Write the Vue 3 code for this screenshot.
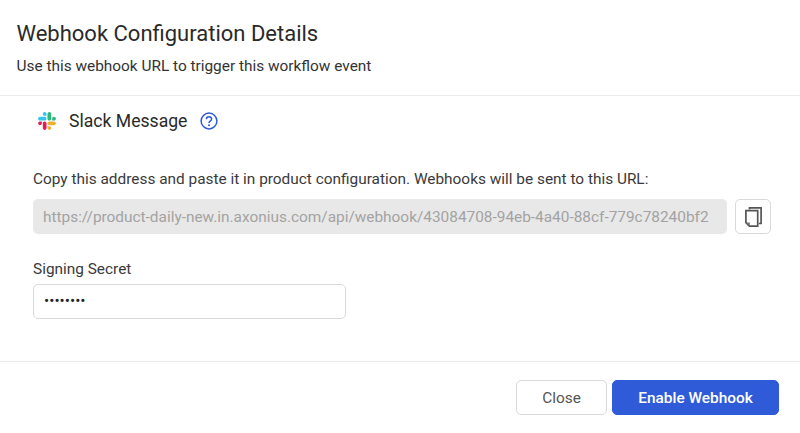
<script setup>
const url = 'https://product-daily-new.in.axonius.com/api/webhook/43084708-94eb-4a40-88cf-779c78240bf2'
</script>

<template>
  <div class="dialog">
    <header class="head">
      <h1 class="title">Webhook Configuration Details</h1>
      <p class="sub">Use this webhook URL to trigger this workflow event</p>
    </header>
    <main class="body">
      <div class="app-row">
        <svg class="slack" viewBox="0 0 127 127" aria-hidden="true">
          <path fill="#E01E5A" d="M27.2 80c0 7.3-5.9 13.2-13.2 13.2C6.7 93.2.8 87.3.8 80c0-7.3 5.9-13.2 13.2-13.2h13.2V80zm6.6 0c0-7.3 5.9-13.2 13.2-13.2 7.3 0 13.2 5.9 13.2 13.2v33c0 7.3-5.9 13.2-13.2 13.2-7.3 0-13.2-5.9-13.2-13.2V80z"/>
          <path fill="#36C5F0" d="M47 27c-7.3 0-13.2-5.9-13.2-13.2C33.8 6.5 39.7.6 47 .6c7.3 0 13.2 5.9 13.2 13.2V27H47zm0 6.7c7.3 0 13.2 5.9 13.2 13.2 0 7.3-5.9 13.2-13.2 13.2H13.9C6.6 60.1.7 54.2.7 46.9c0-7.3 5.9-13.2 13.2-13.2H47z"/>
          <path fill="#2EB67D" d="M99.9 46.9c0-7.3 5.9-13.2 13.2-13.2 7.3 0 13.2 5.9 13.2 13.2 0 7.3-5.9 13.2-13.2 13.2H99.9V46.9zm-6.6 0c0 7.3-5.9 13.2-13.2 13.2-7.3 0-13.2-5.9-13.2-13.2V13.8C66.9 6.5 72.8.6 80.1.6c7.3 0 13.2 5.9 13.2 13.2v33.1z"/>
          <path fill="#ECB22E" d="M80.1 99.8c7.3 0 13.2 5.9 13.2 13.2 0 7.3-5.9 13.2-13.2 13.2-7.3 0-13.2-5.9-13.2-13.2V99.8h13.2zm0-6.6c-7.3 0-13.2-5.9-13.2-13.2 0-7.3 5.9-13.2 13.2-13.2h33.1c7.3 0 13.2 5.9 13.2 13.2 0 7.3-5.9 13.2-13.2 13.2H80.1z"/>
        </svg>
        <span class="app-name">Slack Message</span>
        <svg class="help" viewBox="0 0 18 18" aria-hidden="true">
          <circle cx="9" cy="9" r="7.9" fill="none" stroke="#3059d9" stroke-width="1.5"/>
          <path d="M6.4 7.2c0-1.5 1.1-2.5 2.6-2.5s2.6 1 2.6 2.3c0 1.1-.6 1.6-1.4 2.1-.8.5-1.2 1-1.2 1.8" fill="none" stroke="#3059d9" stroke-width="1.5"/>
          <circle cx="9" cy="13.2" r="1" fill="#3059d9"/>
        </svg>
      </div>

      <label class="label url-label">Copy this address and paste it in product configuration. Webhooks will be sent to this URL:</label>
      <div class="url-row">
        <div class="url-box">{{ url }}</div>
        <button class="copy" type="button" aria-label="Copy">
          <svg viewBox="0 0 17 20" width="17" height="20" aria-hidden="true">
            <path d="M4.5 2.6V.9h11.6v15.6h-2.2" fill="none" stroke="#555" stroke-width="1.7"/>
            <path d="M.9 3.6h11.8v15.5H4.4L.9 15.6z" fill="none" stroke="#555" stroke-width="1.7"/>
            <path d="M1 15.4h3.8V19z" fill="#777"/>
          </svg>
        </button>
      </div>

      <label class="label secret-label">Signing Secret</label>
      <div class="secret">••••••••</div>
    </main>
    <footer class="foot">
      <button class="btn ghost" type="button">Close</button>
      <button class="btn primary" type="button">Enable Webhook</button>
    </footer>
  </div>
</template>

<style scoped>
.dialog {
  width: 800px;
  height: 433px;
  display: flex;
  flex-direction: column;
  background: #fff;
  font-family: Roboto, "Liberation Sans", sans-serif;
  color: #222;
  box-sizing: border-box;
}
.head {
  height: 96px;
  box-sizing: border-box;
  padding: 21px 17px 0 16.5px;
  border-bottom: 1px solid #ebebeb;
}
.title {
  margin: 1px 0 0;
  font-size: 22px;
  line-height: 24px;
  font-weight: 400;
  color: #2a2a2a;
}
.sub {
  margin: 10px 0 0;
  font-size: 15.4px;
  line-height: 20px;
  color: #333;
}
.body {
  flex: 1;
  padding: 0 29px 0 33px;
}
.app-row {
  display: flex;
  align-items: center;
  height: 50px;
  padding-left: 5px;
}
.slack { width: 18px; height: 18px; }
.app-name {
  margin-left: 13px;
  font-size: 17.6px;
  color: #2a2a2a;
}
.help { width: 18px; height: 18px; margin-left: 13px; }
.label {
  display: block;
  font-size: 15.4px;
  line-height: 20px;
  color: #3a3a3a;
}
.url-label { margin-top: 23px; }
.url-row {
  display: flex;
  align-items: center;
  margin-top: 10px;
  gap: 8px;
}
.url-box {
  flex: 1;
  height: 35px;
  line-height: 36px;
  padding: 0 10px;
  box-sizing: border-box;
  border-radius: 5px;
  background: #e8e8e8;
  color: #a3a3a3;
  font-size: 15.4px;
  white-space: nowrap;
  overflow: hidden;
}
.copy {
  width: 36px;
  height: 35px;
  padding: 0;
  display: flex;
  align-items: center;
  justify-content: center;
  background: #fff;
  border: 1px solid #d9d9d9;
  border-radius: 5px;
}
.secret-label { margin-top: 25px; }
.secret {
  width: 313px;
  height: 35px;
  line-height: 33px;
  margin-top: 5px;
  padding: 0 10px;
  box-sizing: border-box;
  border: 1px solid #d9d9d9;
  border-radius: 5px;
  font-size: 15.4px;
  color: #222;
}
.foot {
  height: 72px;
  box-sizing: border-box;
  border-top: 1px solid #ebebeb;
  display: flex;
  justify-content: flex-end;
  gap: 5px;
  padding: 18px 21px 0 0;
}
.btn {
  height: 35px;
  border-radius: 5px;
  font-family: inherit;
  font-size: 15.4px;
  padding: 0;
}
.ghost {
  width: 91px;
  background: #fff;
  border: 1px solid #d9d9d9;
  color: #555;
}
.primary {
  width: 167px;
  background: #305bd8;
  border: 1px solid #305bd8;
  color: #fff;
  font-weight: 500;
}
</style>
